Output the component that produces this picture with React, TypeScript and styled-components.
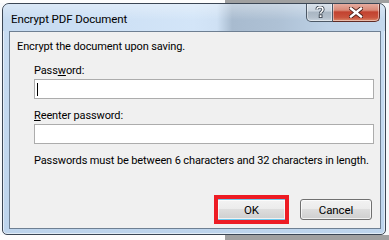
import React from 'react';
import styled, { createGlobalStyle } from 'styled-components';

const GlobalStyle = createGlobalStyle`
  html, body {
    margin: 0;
    padding: 0;
    background: #ffffff;
  }
  body {
    font-family: Roboto, 'Liberation Sans', Arial, sans-serif;
  }
`;

const Desktop = styled.div`
  width: 389px;
  height: 240px;
  overflow: hidden;
  background:
    linear-gradient(to right, #fdfdfd 0, #fdfdfd 225px, #a0a0a0 225px) top left / 100% 3px no-repeat,
    linear-gradient(to right, #fdfdfd 0, #fdfdfd 225px, #a0a0a0 225px) bottom left / 100% 5px no-repeat,
    #f7f9fb;
  padding: 3px 3px 5px 2px;
  box-sizing: border-box;
`;

const Window = styled.div`
  width: 384px;
  height: 232px;
  box-sizing: border-box;
  border: 1px solid #3b4654;
  border-radius: 7px 7px 5px 5px;
  background: linear-gradient(to bottom, #c9ddf2 0%, #bdd4ec 100%);
  box-shadow: inset 0 0 0 1px rgba(255, 255, 255, 0.55);
  display: flex;
  flex-direction: column;
  padding: 0 4px 5px 6px;
  overflow: hidden;
`;

const TitleBar = styled.div`
  height: 27px;
  margin: 0 -4px 0 -6px;
  display: flex;
  align-items: flex-start;
  background:
    linear-gradient(to bottom, rgba(255, 255, 255, 0.35), rgba(255, 255, 255, 0) 60%),
    linear-gradient(to right, #c5daf0 0%, #d3e5f8 50%, #cfe1f4 56%, #a8bbcf 60%, #aec1d5 72%, #bdd1e6 85%, #c4d8ed 100%);
  border-radius: 6px 6px 0 0;
`;

const Title = styled.div`
  flex: 1;
  padding: 7px 0 0 8px;
  font-size: 11.5px;
  letter-spacing: -0.1px;
  line-height: 16px;
  color: #000;
`;

const CaptionGroup = styled.div`
  display: flex;
  margin-right: 5px;
  margin-top: -1px;
`;

const CaptionButton = styled.div<{ $kind: 'help' | 'close' }>`
  height: 19px;
  width: ${(p) => (p.$kind === 'close' ? '47px' : '27px')};
  box-sizing: border-box;
  border: 1px solid ${(p) => (p.$kind === 'close' ? '#5f2b25' : '#4c5866')};
  border-top: none;
  border-left: ${(p) => (p.$kind === 'close' ? 'none' : '1px solid #4c5866')};
  border-radius: ${(p) => (p.$kind === 'close' ? '0 0 5px 0' : '0 0 0 5px')};
  background: ${(p) =>
    p.$kind === 'close'
      ? 'linear-gradient(to bottom, #e8b2a6 0%, #d98a78 40%, #c2422f 50%, #c9533d 80%, #dc8a6a 100%)'
      : 'linear-gradient(to bottom, #dce4ec 0%, #c9d3dd 45%, #a9b6c3 50%, #b3bfcb 80%, #c8d3de 100%)'};
  box-shadow: inset 0 0 0 1px rgba(255, 255, 255, 0.45);
  display: flex;
  align-items: center;
  justify-content: center;
`;

const Client = styled.div`
  flex: 1;
  border: 1px solid #6e7f92;
  background: #f0f0f0;
  padding: 7px 6px 0 7px;
  display: flex;
  flex-direction: column;
  font-size: 11px;
  letter-spacing: -0.12px;
  line-height: 16px;
  color: #000;
`;

const Intro = styled.div`
  margin-bottom: 8px;
`;

const Field = styled.div`
  padding-left: 17px;
  display: flex;
  flex-direction: column;
`;

const Label = styled.div`
  u {
    text-decoration: underline;
    text-underline-offset: 1px;
  }
`;

const TextBox = styled.div`
  height: 20px;
  box-sizing: border-box;
  border: 1px solid #acacac;
  background: #fff;
  margin-bottom: 9px;
  padding: 3px 0 0 2px;
`;

const Caret = styled.div`
  width: 1px;
  height: 13px;
  background: #000;
`;

const Hint = styled.div`
  padding-left: 17px;
  white-space: nowrap;
`;

const Footer = styled.div`
  margin-top: auto;
  display: flex;
  justify-content: flex-end;
  align-items: center;
  gap: 11px;
  padding: 0 2px 4px 0;
`;

const Highlight = styled.div`
  border: 4px solid #ed1c24;
  display: flex;
`;

const Button = styled.div<{ $default?: boolean }>`
  width: ${(p) => (p.$default ? '67px' : '72px')};
  height: 21px;
  box-sizing: border-box;
  border: ${(p) => (p.$default ? 'none' : '1px solid #707070')};
  border-top: ${(p) => (p.$default ? '1px solid #6cc8ec' : '1px solid #707070')};
  border-bottom: ${(p) => (p.$default ? '1px solid #6cc8ec' : '1px solid #707070')};
  border-radius: ${(p) => (p.$default ? '0' : '3px')};
  background: linear-gradient(to bottom, #f2f2f2 0%, #ebebeb 50%, #dddddd 50%, #cfcfcf 100%);
  box-shadow: inset 0 0 0 1px rgba(255, 255, 255, 0.7);
  display: flex;
  align-items: center;
  justify-content: center;
  font-size: 11.5px;
  color: #000;
`;

const HelpGlyph = () => (
  <svg width="10" height="12" viewBox="0 0 10 12">
    <path
      d="M2 3.6 C2 1.6 3.4 1 5 1 C6.8 1 8 2 8 3.6 C8 5.4 5.6 5.6 5.6 7.6"
      fill="none"
      stroke="#3a4450"
      strokeWidth="3.2"
    />
    <path
      d="M2 3.6 C2 1.6 3.4 1 5 1 C6.8 1 8 2 8 3.6 C8 5.4 5.6 5.6 5.6 7.6"
      fill="none"
      stroke="#ffffff"
      strokeWidth="1.5"
    />
    <rect x="4.2" y="8.8" width="2.8" height="2.8" fill="#ffffff" stroke="#3a4450" strokeWidth="0.9" />
  </svg>
);

const CloseGlyph = () => (
  <svg width="14" height="11" viewBox="0 0 14 11">
    <path d="M2 1.5 L12 9.5 M12 1.5 L2 9.5" stroke="#4a1e18" strokeWidth="4.2" strokeLinecap="square" />
    <path d="M2 1.5 L12 9.5 M12 1.5 L2 9.5" stroke="#ffffff" strokeWidth="2.4" strokeLinecap="square" />
  </svg>
);

const App: React.FC = () => {
  return (
    <>
      <GlobalStyle />
      <Desktop>
        <Window>
          <TitleBar>
            <Title>Encrypt PDF Document</Title>
            <CaptionGroup>
              <CaptionButton $kind="help">
                <HelpGlyph />
              </CaptionButton>
              <CaptionButton $kind="close">
                <CloseGlyph />
              </CaptionButton>
            </CaptionGroup>
          </TitleBar>
          <Client>
            <Intro>Encrypt the document upon saving.</Intro>
            <Field>
              <Label>
                Pass<u>w</u>ord:
              </Label>
              <TextBox>
                <Caret />
              </TextBox>
            </Field>
            <Field>
              <Label>
                <u>R</u>eenter password:
              </Label>
              <TextBox />
            </Field>
            <Hint>Passwords must be between 6 characters and 32 characters in length.</Hint>
            <Footer>
              <Highlight>
                <Button $default>OK</Button>
              </Highlight>
              <Button>Cancel</Button>
            </Footer>
          </Client>
        </Window>
      </Desktop>
    </>
  );
};

export default App;
